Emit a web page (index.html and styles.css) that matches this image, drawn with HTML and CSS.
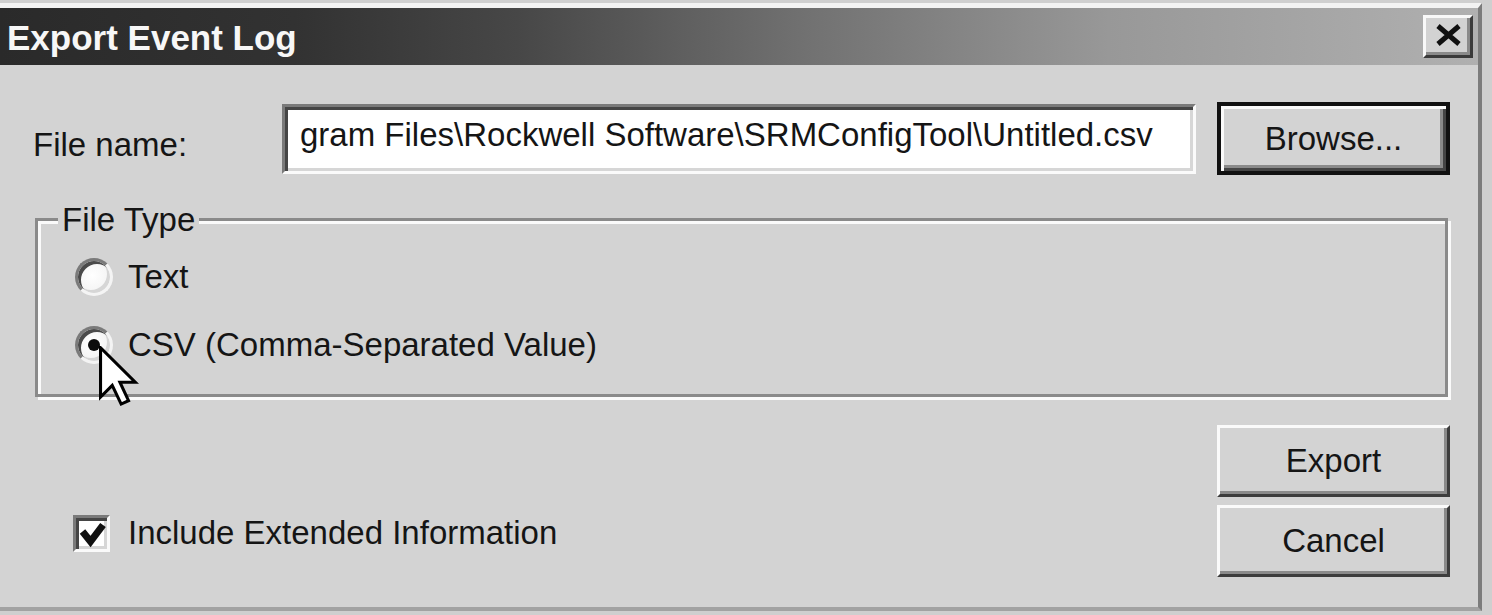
FILE: index.html
```html
<!DOCTYPE html>
<html>
<head>
<meta charset="utf-8">
<title>Export Event Log</title>
<link rel="stylesheet" href="styles.css">
</head>
<body>
<div class="window">
  <div class="titlebar">
    <span class="title">Export Event Log</span>
    <button class="close" type="button" aria-label="Close">
      <svg width="27" height="22" viewBox="0 0 27 22"><path d="M3 2 L24 20 M24 2 L3 20" stroke="#111" stroke-width="5" fill="none"/></svg>
    </button>
  </div>
  <div class="content">
    <div class="file-row">
      <span class="file-label">File name:</span>
      <div class="textbox">gram Files\Rockwell Software\SRMConfigTool\Untitled.csv</div>
      <button class="btn btn-default" type="button">Browse...</button>
    </div>
    <div class="group">
      <div class="legend">File Type</div>
      <div class="radio-row first"><span class="radio"></span><span class="opt">Text</span></div>
      <div class="radio-row second"><span class="radio checked"><svg class="cursor" width="40" height="62" viewBox="0 0 13 20"><path d="M0.5 0.5 L0.5 16.5 L4.3 12.7 L7.2 18.8 L9.6 17.7 L6.8 11.7 L11.8 11.7 Z" fill="#fff" stroke="#000" stroke-width="1" stroke-linejoin="miter"/></svg></span><span class="opt">CSV (Comma-Separated Value)</span></div>
    </div>
    <div class="bottom">
      <div class="check-row">
        <span class="checkbox"><svg width="31" height="31" viewBox="0 0 31 31"><path d="M6.5 13.5 L14.5 23.5 L27 7" stroke="#111" stroke-width="7" fill="none" stroke-linejoin="miter"/></svg></span>
        <span class="opt">Include Extended Information</span>
      </div>
      <div class="actions">
        <button class="btn" type="button">Export</button>
        <button class="btn" type="button">Cancel</button>
      </div>
    </div>
  </div>
</div>
</body>
</html>
```
FILE: styles.css
```css
* { box-sizing: border-box; }
html, body { margin: 0; padding: 0; }
body {
  width: 1492px;
  height: 615px;
  overflow: hidden;
  background: #cfcfcf;
  font-family: "Liberation Sans", Arial, sans-serif;
  font-size: 33px;
  color: #151515;
}
.window {
  width: 1482px;
  height: 608px;
  margin-top: 3px;
  border-top: 5px solid #f3f3f3;
  border-right: 4px solid #7c7c7c;
  border-bottom: 4px solid #a2a2a2;
  background: #d3d3d3;
  display: flex;
  flex-direction: column;
}
.titlebar {
  height: 57px;
  flex: none;
  display: flex;
  align-items: center;
  justify-content: space-between;
  padding: 0 5px 0 7px;
  background: linear-gradient(90deg, #2a2a2a 0%, #323232 20%, #474747 35%, #727272 55%, #989898 75%, #b0b0b0 100%);
}
.title {
  color: #f7f7f7;
  font-weight: bold;
  font-size: 35px;
  line-height: 40px;
  padding-top: 3px;
}
.close {
  width: 50px;
  height: 43px;
  padding: 0;
  background: #d2d2d2;
  border: 3px solid;
  border-color: #f8f8f8 #3a3a3a #3a3a3a #f8f8f8;
  box-shadow: inset -3px -3px 0 #8a8a8a;
  display: flex;
  align-items: center;
  justify-content: center;
}
.close svg { display: block; margin-top: -3px; }
.content {
  flex: 1;
  padding: 0 28px 0 33px;
  display: flex;
  flex-direction: column;
}
.file-row {
  margin-top: 37px;
  height: 73px;
  display: flex;
  align-items: center;
}
.file-label {
  width: 249px;
  flex: none;
  line-height: 38px;
  padding-top: 12px;
}
.textbox {
  width: 914px;
  height: 70px;
  flex: none;
  background: #ffffff;
  border: 3px solid;
  border-color: #7a7a7a #fafafa #fafafa #7a7a7a;
  box-shadow: inset 3px 3px 0 #454545, inset -3px -3px 0 #d6d6d6;
  padding: 9px 0 0 15px;
  line-height: 38px;
  white-space: nowrap;
  overflow: hidden;
}
.btn {
  width: 233px;
  height: 72px;
  flex: none;
  margin: 0;
  padding: 0;
  font-family: inherit;
  font-size: 33px;
  line-height: 38px;
  color: #151515;
  background: #d3d3d3;
  border: 3px solid;
  border-color: #fafafa #3c3c3c #3c3c3c #fafafa;
  box-shadow: inset -3px -3px 0 #8a8a8a;
}
.btn-default {
  margin-left: 21px;
  height: 73px;
  border: 4px solid #111;
  box-shadow: inset 3px 3px 0 #fafafa, inset -3px -3px 0 #454545, inset -6px -6px 0 #8a8a8a;
}
.group {
  margin: 43px 0 0 2px;
  width: 1413px;
  height: 179px;
  flex: none;
  border: 3px solid #8a8a8a;
  box-shadow: inset 3px 3px 0 #fafafa, 3px 3px 0 #fafafa;
  padding-left: 37px;
  display: flex;
  flex-direction: column;
  align-items: flex-start;
}
.legend {
  margin: -20px 0 0 -17px;
  padding: 0 4px;
  background: #d3d3d3;
  line-height: 38px;
}
.radio-row {
  height: 38px;
  display: flex;
  align-items: center;
  gap: 15px;
}
.radio-row.first { margin-top: 19px; }
.radio-row.second { margin-top: 30px; }
.opt { line-height: 38px; white-space: nowrap; }
.radio {
  position: relative;
  width: 38px;
  height: 38px;
  flex: none;
  border-radius: 50%;
  background: radial-gradient(circle at 45% 45%, #ffffff 0%, #f6f6f6 55%, #e2e2e2 100%);
  border: 3px solid;
  border-color: #7a7a7a #f4f4f4 #f4f4f4 #7a7a7a;
  box-shadow: inset 3px 3px 0 #4a4a4a, inset -3px -3px 0 #d6d6d6;
  display: flex;
  align-items: center;
  justify-content: center;
}
.radio.checked::before {
  content: "";
  width: 12px;
  height: 12px;
  border-radius: 50%;
  background: #0d0d0d;
}
.cursor {
  position: absolute;
  left: 21px;
  top: 17px;
  z-index: 2;
  display: block;
}
.bottom {
  margin-top: 28px;
  display: flex;
  justify-content: space-between;
  align-items: flex-start;
}
.check-row {
  margin: 89px 0 0 40px;
  height: 38px;
  display: flex;
  align-items: center;
  gap: 18px;
}
.checkbox {
  width: 37px;
  height: 37px;
  flex: none;
  background: #ffffff;
  border: 3px solid;
  border-color: #7a7a7a #fafafa #fafafa #7a7a7a;
  box-shadow: inset 3px 3px 0 #454545, inset -3px -3px 0 #d6d6d6;
}
.checkbox svg { display: block; }
.actions {
  display: flex;
  flex-direction: column;
  gap: 8px;
}
```
